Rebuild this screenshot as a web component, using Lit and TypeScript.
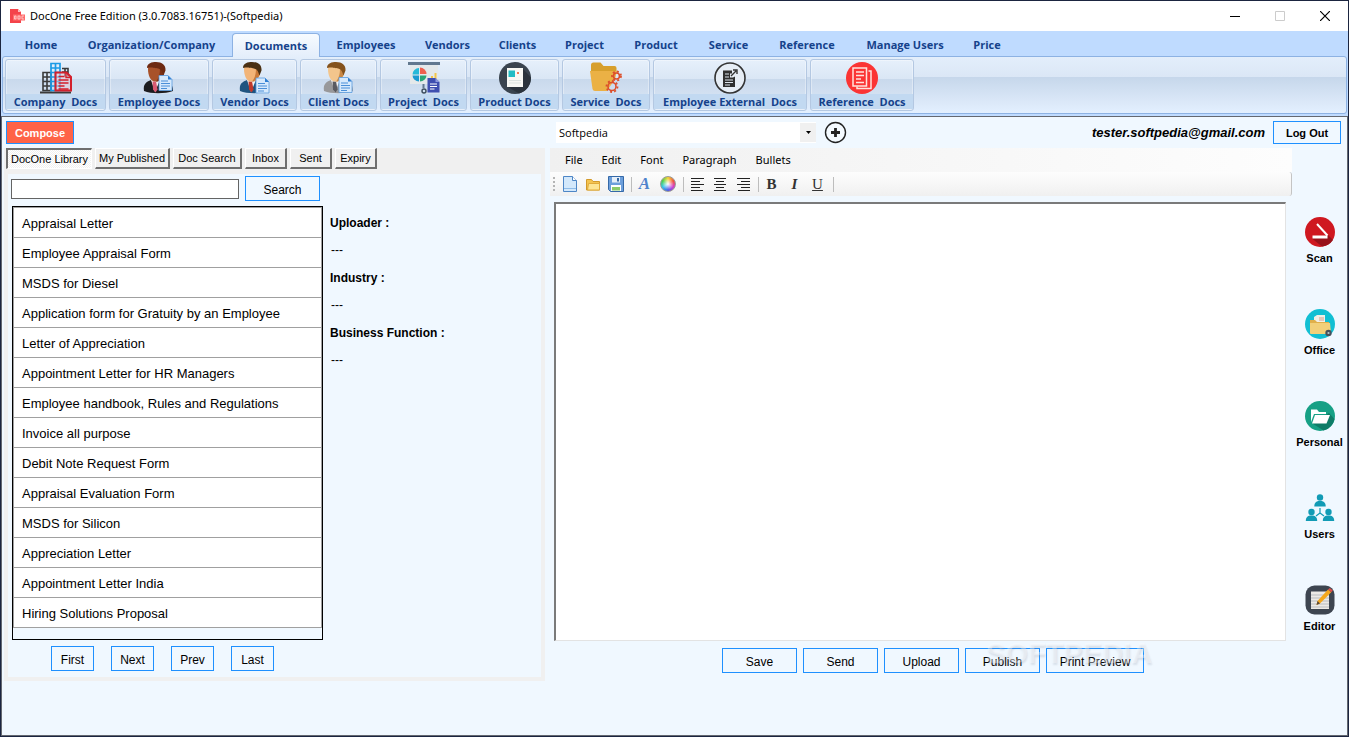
import { LitElement, html, css, svg } from "lit";
import { customElement, state } from "lit/decorators.js";
import { classMap } from "lit/directives/class-map.js";
import { styleMap } from "lit/directives/style-map.js";

const TABS = [
  { label: "Home", width: 60 },
  { label: "Organization/Company", width: 157 },
  { label: "Documents", width: 88 },
  { label: "Employees", width: 88 },
  { label: "Vendors", width: 71 },
  { label: "Clients", width: 65 },
  { label: "Project", width: 65 },
  { label: "Product", width: 74 },
  { label: "Service", width: 67 },
  { label: "Reference", width: 86 },
  { label: "Manage Users", width: 106 },
  { label: "Price", width: 54 },
];

const page = (x: number, y: number) => svg`
  <path d="M${x} ${y}h9l4 4v11h-13z" fill="#d6e9fc" stroke="#5b9ce0" stroke-width="0.8"/>
  <path d="M${x + 9} ${y}v4h4z" fill="#2f7fd2"/>
  <path d="M${x + 2} ${y + 5.5}h7M${x + 2} ${y + 8}h9M${x + 2} ${y + 10.5}h9M${x + 2} ${y + 13}h6" stroke="#4a8fd8" stroke-width="1"/>`;

const companyIcon = svg`
  <path d="M0 30.500h31" stroke="#3a3a3a" stroke-width="2"/>
  <path d="M3 10.500h8v18h-8zM3 15h8M3 19.500h8M3 24h8M7 10.500v18" fill="none" stroke="#3a3a3a" stroke-width="1.600"/>
  <path d="M22 6.500h6v8M25 6.500v8M22 10h6" fill="none" stroke="#3a3a3a" stroke-width="1.600"/>
  <path d="M11 1.500h9v27h-9zM11 6h9M11 10.500h9M11 15h9M11 19.500h9M11 24h9M15.500 1v27" fill="none" stroke="#1b9be6" stroke-width="1.700"/>
  <path d="M15.500 10.500h11l4.500 4.500v13.500h-15.500z" fill="#e9c9d4" fill-opacity="0.500" stroke="#d3202c" stroke-width="2"/>
  <path d="M18.500 14.500h6M18.500 18h10M18.500 21h10M18.500 24h6M18.500 27h10M26 11v4.500h5" fill="none" stroke="#d3202c" stroke-width="1.400"/>`;

const person = (skin: string, dark: string, hair: string, suit: string, tie: string) => svg`
  <path d="M1 29c-1-7 2-9 7-11l6 2 7-3c6 2 9 6 9 12-8 3-22 3-29 0z" fill="${suit}"/>
  <path d="M8 18l4 12 5-12z" fill="#f2f2f2"/>
  <path d="M9.500 19.500h3.500l1.500 8-2 3-2.500-3z" fill="${tie}"/>
  <path d="M13 20l6-2-1-4z" fill="${dark}"/>
  <path d="M5 7c0-4 3-5 7-5 6 0 9 3 9 8 0 6-4 9.500-9 9.500-4.500 0-7-6-7-12.500z" fill="${skin}"/>
  <path d="M17 6c0 6-1 10-4 13.500 5-1 8-5 8-10z" fill="${dark}"/>
  <path d="M4 6c0-5 5-6 9-6 6 0 10 3 9.500 8.500l-2 5c-1-2-1-4-3-6-3-2-6-1-8-2-2 0-4 0-5.500.5z" fill="${hair}"/>`;

const employeeIcon = svg`${person("#a8522a", "#7c3115", "#6d2a12", "#1c1c1f", "#d85a72")}${page(16, 13.500)}`;
const vendorIcon = svg`${person("#f2b478", "#c97a3a", "#4a3013", "#1f5480", "#c0392b")}${page(17, 16)}`;
const clientIcon = svg`${person("#f3c58c", "#c98845", "#84521c", "#98989a", "#5a5a60")}${page(16, 15.500)}`;

const projectIcon = svg`
  <path d="M0 0h32v3h-32z" fill="#62788f"/><path d="M2 3h28v19h-28z" fill="#e4e8ea"/>
  <path d="M15.500 22v4" stroke="#62788f" stroke-width="2"/>
  <circle cx="16" cy="29" r="2" fill="none" stroke="#3c4c5c" stroke-width="1.400"/>
  <path d="M11 12.500V6a6.500 6.500 0 0 0-6.500 6.500z" fill="#27b9d8"/>
  <path d="M12 12V5.500a6.500 6.500 0 0 1 6.500 6.500z" fill="#f0604f"/>
  <path d="M11 13.500v6a6.500 6.500 0 0 1-6.500-6z" fill="#1b9ad0"/>
  <path d="M12 13.500v6a6.500 6.500 0 0 0 6.500-6z" fill="#2ba578"/>
  <path d="M24 14v3M27.500 11v6" stroke="#f3c54a" stroke-width="2"/>
  <path d="M19.500 16h8l4 4v10.500h-12z" fill="#3f4fb0"/><path d="M27.500 16v4h4z" fill="#8d98dd"/>
  <path d="M22 22h7M22 24.500h7M22 27h4.500" stroke="#fff" stroke-width="1.200"/>`;

const productIcon = svg`
  <circle cx="16" cy="16" r="16" fill="#3a444f"/>
  <path d="M24 7l8 8.500a16 16 0 0 1-12 16l-12-7z" fill="#2b333c"/>
  <path d="M8 6h16v19h-16z" fill="#f8f8f4"/><path d="M9.500 8.500h6.500v6.500h-6.500z" fill="#22bcc4"/>
  <path d="M18 11h2" stroke="#ef7d57" stroke-width="2"/><path d="M10 18.500h12M10 21h12" stroke="#dde3e0"/>`;

const gear = (x: number, y: number, r: number) => svg`
  <circle cx="${x}" cy="${y}" r="${r}" fill="none" stroke="#dc4f2c" stroke-width="1.600"/>
  <circle cx="${x}" cy="${y}" r="${r + 1.5}" fill="none" stroke="#dc4f2c" stroke-width="1.800" stroke-dasharray="2 2.200"/>`;

const serviceIcon = svg`
  <path d="M1 3q0-2.500 2.500-2.500h7l3 3.500h11q2 0 2 2v3h-25.500z" fill="#d79f2c"/>
  <path d="M0 9h27l-2 8-8 12h-12q-2 0-2.500-2z" fill="#ebb145"/>
  ${gear(26.5, 14, 3)}${gear(22, 24.5, 4)}`;

const externalIcon = svg`
  <circle cx="16" cy="16" r="15" fill="#e6edf5" stroke="#333" stroke-width="1.600"/>
  <path d="M9 8.500h9v3h-2v4h3l2-1v10.500h-12z" fill="#2f2f2f"/>
  <path d="M11 12h4M11 15h4M11 18h8M11 20.500h8M11 23h5" stroke="#dce4ec" stroke-width="1"/>
  <path d="M17 14l5-5M19 8h4v4" fill="none" stroke="#333" stroke-width="1.400"/>`;

const referenceIcon = svg`
  <circle cx="16" cy="16" r="16" fill="#fb3434"/>
  <path d="M7 6h13.500v18h-13.500z" fill="none" stroke="#ffe3dd" stroke-width="1.500"/>
  <path d="M10 10h8M10 13.500h8M10 17h5M10 20.500h8" stroke="#ffe3dd" stroke-width="1.300"/>
  <path d="M22.500 9h2.500v17.500h-14v-2" fill="none" stroke="#ffe3dd" stroke-width="1.500"/>`;

const RIBBON = [
  { label: "Company  Docs", width: 101, icon: companyIcon },
  { label: "Employee Docs", width: 100, icon: employeeIcon },
  { label: "Vendor Docs", width: 85, icon: vendorIcon },
  { label: "Client Docs", width: 77, icon: clientIcon },
  { label: "Project  Docs", width: 87, icon: projectIcon },
  { label: "Product Docs", width: 89, icon: productIcon },
  { label: "Service  Docs", width: 88, icon: serviceIcon },
  { label: "Employee External  Docs", width: 154, icon: externalIcon },
  { label: "Reference  Docs", width: 104, icon: referenceIcon },
];

const PANES = [
  { label: "DocOne Library", width: 86 },
  { label: "My Published", width: 75 },
  { label: "Doc Search", width: 69 },
  { label: "Inbox", width: 42 },
  { label: "Sent", width: 42 },
  { label: "Expiry", width: 42 },
];

const DOCS = [
  "Appraisal Letter",
  "Employee Appraisal Form",
  "MSDS for Diesel",
  "Application form for Gratuity by an Employee",
  "Letter of Appreciation",
  "Appointment Letter for HR Managers",
  "Employee handbook, Rules and Regulations",
  "Invoice all purpose",
  "Debit Note Request Form",
  "Appraisal Evaluation Form",
  "MSDS for Silicon",
  "Appreciation Letter",
  "Appointment Letter India",
  "Hiring Solutions Proposal",
];

const user = (x: number, y: number) => svg`
  <circle cx="${x}" cy="${y}" r="3.200" fill="#129bb5"/>
  <path d="M${x - 5.7} ${y + 9}c0-4 2-5 4-5.500h3.400c2 .5 4 1.500 4 5.500z" fill="#129bb5"/>`;

const RAIL = [
  {
    label: "Scan",
    icon: svg`<circle cx="15" cy="15" r="15" fill="#cf1820"/>
      <path d="M23 18l5 5a15 15 0 0 1-11 6.500l-10-8z" fill="#98121a"/>
      <path d="M7.500 18.500h15v3h-15z" fill="#fff"/><path d="M12 7l10.500 11.500" stroke="#fff" stroke-width="2"/>`,
  },
  {
    label: "Office",
    icon: svg`<circle cx="15" cy="15" r="15" fill="#12bfd3"/>
      <path d="M9 8l3-2h8v12h-11z" fill="#f2efe6"/><path d="M14 9h5M14 11h5" stroke="#d9a08a"/>
      <path d="M5 11h5l2 2h12v10h-19z" fill="#e0b04a"/><path d="M5 14h20l1 10q0 1-1 1h-19q-1 0-1-1z" fill="#f2d079"/>
      <circle cx="23.500" cy="24" r="3.200" fill="#45515c"/><circle cx="23.500" cy="24" r="1.100" fill="#b8c4cc"/>`,
  },
  {
    label: "Personal",
    icon: svg`<circle cx="15" cy="15" r="15" fill="#16a085"/>
      <path d="M24 12l5.500 6a15 15 0 0 1-11 11.500l-11-7z" fill="#0e7c67"/>
      <path d="M6 8.500h6l2 2.500h7v2h-12l-3 8z" fill="#fff"/><path d="M10 14h15l-3.500 8.500h-14.500z" fill="#fff"/>`,
  },
  {
    label: "Users",
    icon: svg`${user(15, 4.500)}${user(6.500, 19)}${user(23.500, 19)}
      <path d="M15 15v5M15 20l-4 3M15 20l4 3" fill="none" stroke="#129bb5" stroke-width="1.200"/>`,
  },
  {
    label: "Editor",
    icon: svg`<rect x="0.500" y="0.500" width="29" height="29" rx="9" fill="#3d4550"/>
      <path d="M6 6.500h18v17.500h-18z" fill="#eceae6"/>
      <path d="M6 10h18M6 13h18M6 16h18M6 19h18M6 22h18" stroke="#b9bcc0"/>
      <path d="M11.500 20l1-4L23 4.500l3.200 2.800L15 18.500z" fill="#f5a81c"/>
      <path d="M23 4.500l1.800-1.500 3 2.600-1.600 1.700z" fill="#e0524a"/><path d="M11.500 20l1-4 2.500 2.500z" fill="#5b4a3a"/>`,
  },
];

const glyph = (body: unknown, size = 16) =>
  html`<svg width=${size} height=${size} viewBox="0 0 16 16" aria-hidden="true">${body}</svg>`;

const TOOLS: { name: string; art?: unknown }[] = [
  { name: "New", art: svg`<path d="M1.500 .5h9l4 4v11h-13z" fill="#d3e8fb" stroke="#4e86c6"/><path d="M10.500 .5v4h4" fill="#fff" stroke="#4e86c6"/><path d="M2 12.500h12" stroke="#8fbce8"/>` },
  { name: "Open", art: svg`<path d="M1.500 3.500h5l1.500 2h6.500v8.500h-13z" fill="#f4c451" stroke="#d39a2b"/><path d="M3.500 7.500h11v6.500h-12z" fill="#fde594" stroke="#e0ab3b"/>` },
  { name: "Save", art: svg`<path d="M.5 .5h15v15h-13l-2-2z" fill="#6d9fdb" stroke="#3569a8"/><path d="M4 1h8v5.500h-8z" fill="#e6eff9"/><path d="M9 2h2v3.500h-2z" fill="#3569a8"/><path d="M3 9h10v6h-10z" fill="#fff"/><path d="M4 11h8v3.500h-8z" fill="#8ccb6a"/>` },
  { name: "" },
  { name: "Font" },
  { name: "Color" },
  { name: "" },
  { name: "Left", art: svg`<path d="M2 2.500h13M2 5.500h9M2 8.500h13M2 11.500h9M2 14.500h12" stroke="#222"/>` },
  { name: "Center", art: svg`<path d="M2 2.500h12M4 5.500h8M2 8.500h12M4 11.500h8M2 14.500h12" stroke="#222"/>` },
  { name: "Right", art: svg`<path d="M2 2.500h13M6 5.500h9M2 8.500h13M6 11.500h9M3 14.500h12" stroke="#222"/>` },
  { name: "" },
  { name: "Bold" },
  { name: "Italic" },
  { name: "Underline" },
  { name: "" },
];

@customElement("app-root")
export class AppRoot extends LitElement {
  static styles = css`
    :host {
      display: block;
      font-family: "Liberation Sans", Arial, sans-serif;
      font-size: 13px;
      color: #000;
    }
    * { box-sizing: border-box; }
    button, input, select, textarea { font: inherit; color: inherit; margin: 0; border-radius: 0; }
    button { padding: 0; cursor: pointer; }
    svg { display: block; flex: none; }
    .window {
      min-height: 100vh;
      display: flex;
      flex-direction: column;
      border: 1px solid #1b2540;
      background: #bfdbff;
    }
    .titlebar {
      display: flex;
      align-items: center;
      height: 30px;
      padding: 0 1px 0 8px;
      background: #fff;
    }
    .title {
      flex: 1;
      margin: 0 0 0 5px;
      font: 400 11px/16px "Noto Sans", "Open Sans", sans-serif;
    }
    .caption-button {
      width: 45px;
      height: 30px;
      display: grid;
      place-items: center;
      border: 0;
      background: none;
    }
    .tabs { display: flex; height: 25px; padding-left: 9px; }
    .tab {
      display: flex;
      align-items: center;
      justify-content: center;
      height: 25px;
      margin: 0 1px;
      padding-top: 2px;
      color: #15428b;
      text-decoration: none;
      white-space: nowrap;
      border: 1px solid transparent;
      border-bottom: 0;
      font: 700 11px/16px "Open Sans", "Noto Sans", sans-serif;
    }
    .tab.active {
      position: relative;
      height: 24px;
      margin-top: 2px;
      padding-top: 0;
      border-color: #8db2e3;
      border-radius: 4px 4px 0 0;
      background: linear-gradient(#f7fbff, #e4eefb);
    }
    .ribbon {
      display: flex;
      gap: 3px;
      margin: 0 1px 2px;
      padding: 2px;
      border: 1px solid #8db2e3;
      border-radius: 3px;
      background: linear-gradient(#e3eefb, #dbe7f6 35%, #c6d7eb 36%, #dbe8f8 80%, #e3f0ff);
    }
    .ribbon-button {
      display: flex;
      flex-direction: column;
      align-items: center;
      height: 52px;
      border: 1px solid #b4c8e2;
      border-radius: 3px;
      background: linear-gradient(#e6f0fb, #dae6f5 38%, #c9d9ec 39%, #dde9f7);
      box-shadow: inset 0 0 0 1px rgba(255, 255, 255, 0.35);
      padding-top: 2px;
      color: #15428b;
      font: 700 11px/15px "Open Sans", "Noto Sans", sans-serif;
    }
    .ribbon-label {
      align-self: stretch;
      background: #c2d9f1;
      text-align: center;
      white-space: pre;
    }
    .client {
      flex: 1;
      display: flex;
      flex-direction: column;
      border: 1px solid #646870;
      background: #f0f8ff;
      padding: 4px 0 54px 2px;
    }
    .row { display: grid; grid-template-columns: 541px minmax(0, 1fr) 55px; }
    .account { height: 27px; align-items: start; }
    .outlined { border: 1px solid #1e90ff; background: #f0f8ff; white-space: nowrap; font-size: 12px; }
    .compose {
      width: 68px;
      height: 23px;
      margin-left: 2px;
      background: #ff6347;
      color: #fff;
      font-weight: 700;
      font-size: 11px;
    }
    .account-bar { grid-column: 2 / 4; display: flex; align-items: center; padding: 0 6px 0 11px; }
    .combo { position: relative; width: 260px; height: 21px; }
    .combo-select {
      width: 100%;
      height: 21px;
      padding: 0 20px 0 3px;
      border: 0;
      appearance: none;
      background: #fff;
      font: 400 11px/16px "Open Sans", "Noto Sans", sans-serif;
    }
    .combo-arrow {
      position: absolute;
      right: 0;
      top: 1px;
      width: 16px;
      height: 19px;
      display: grid;
      place-items: center;
      background: #f0f0f0;
      pointer-events: none;
    }
    .add { margin-left: 8px; border: 0; background: none; height: 23px; }
    .email { margin-left: auto; margin-right: 8px; font-style: italic; font-weight: 700; font-size: 13px; }
    .logout { width: 68px; height: 23px; font-size: 11px; font-weight: 700; }
    .main { flex: 1; }
    .library {
      display: flex;
      flex-direction: column;
      background: #f0f0f0;
      padding: 0 4px 4px;
    }
    .panes { display: flex; gap: 3px; height: 26px; margin-left: -2px; }
    .pane {
      height: 21px;
      border: 1px solid;
      border-width: 1px 2px 2px 1px;
      border-color: #fff #6f6f6f #6f6f6f #fff;
      background: #f0f0f0;
      font-size: 11px;
      white-space: nowrap;
    }
    .pane.active {
      border-width: 2px 1px 1px 2px;
      border-color: #6f6f6f #fff #fff #6f6f6f;
      background: repeating-conic-gradient(#fff 0 25%, #f0f0f0 0 50%) 0 0 / 2px 2px;
    }
    .library-body {
      flex: 1;
      display: flex;
      flex-direction: column;
      padding: 2px 4px 6px 3px;
      background: #f0f8ff;
    }
    .search { display: flex; align-items: center; gap: 6px; }
    .search-input { width: 228px; height: 20px; border: 1px solid #646464; background: #fff; padding: 0 4px; }
    .search-button { width: 75px; height: 25px; padding-top: 2px; }
    .browse { flex: 1; display: flex; gap: 7px; margin: 5px 0 6px 1px; }
    .docs {
      width: 311px;
      margin: 0;
      padding: 0;
      list-style: none;
      border: 1px solid #000;
    }
    .doc {
      display: block;
      width: 100%;
      height: 30px;
      padding: 2px 8px 0;
      text-align: left;
      border: 1px solid #a0a0a0;
      border-top: 0;
      background: #fff;
    }
    .docs li:first-child .doc { height: 31px; border-top: 1px solid #a0a0a0; }
    .details { margin: 9px 0 0; font-size: 12px; line-height: 16px; }
    .details dt { font-weight: 700; }
    .details dd { margin: 11px 0 12px 1px; }
    .pager { display: flex; gap: 17px; margin-left: 40px; }
    .pager-button { width: 43px; height: 25px; padding-top: 2px; }
    .editor { display: flex; flex-direction: column; margin-left: 5px; }
    .menubar {
      display: flex;
      align-items: center;
      gap: 19px;
      height: 24px;
      padding-left: 15px;
      background: linear-gradient(90deg, #f0f0f0, #fdfdfd);
    }
    .menu { border: 0; background: none; font: 400 11px/16px "Noto Sans", "Open Sans", sans-serif; }
    .toolbar {
      display: flex;
      align-items: center;
      height: 24px;
      padding-left: 3px;
      border-right: 1px solid #c4c4c4;
      border-radius: 0 3px 3px 0;
      background: linear-gradient(#fdfdfd, #f0f0f0);
    }
    .grip {
      width: 2px;
      height: 15px;
      margin-right: 3px;
      background: repeating-linear-gradient(#b4b4b4 0 2px, transparent 2px 4px);
    }
    .tool { width: 23px; height: 22px; display: grid; place-items: center; border: 0; background: none; }
    .rule { width: 6px; height: 15px; border-right: 1px solid #bdbdbd; margin-right: 1px; margin-left: -1px; }
    .tool-letter { font: 700 15px/16px "Liberation Serif", serif; color: #333; }
    .italic { font-style: italic; }
    .underline { font-weight: 400; text-decoration: underline; }
    .font-letter { font-style: italic; color: #4f83cc; font-size: 17px; }
    .wheel {
      width: 16px;
      height: 16px;
      border-radius: 50%;
      background: radial-gradient(#fff, transparent 60%), conic-gradient(#f6d433, #f0503c, #d43bd0, #4a5be8, #35c4ea, #4cd04a, #f6d433);
      border: 1px solid #999;
    }
    .sheet {
      flex: 1;
      display: block;
      margin: 6px 6px 7px 4px;
      min-height: 200px;
      border: solid;
      border-width: 2px 1px 1px 2px;
      border-color: #7a7a7a #e3e3e3 #e3e3e3 #7a7a7a;
      background: #fff;
      resize: none;
      outline: none;
    }
    .actions { position: relative; display: flex; justify-content: center; gap: 6px; padding: 0 0 8px 24px; }
    .action { width: 75px; height: 25px; padding-top: 2px; }
    .wide { width: 98px; }
    .watermark {
      position: absolute;
      left: 436px;
      top: -12px;
      font: 700 29px/34px "Liberation Sans", Arial, sans-serif;
      color: rgba(255, 255, 255, 0.35);
      text-shadow: 1px 2px 2px rgba(120, 130, 150, 0.2);
      pointer-events: none;
    }
    .rail { display: flex; flex-direction: column; gap: 43px; padding-top: 69px; }
    .rail-button {
      display: flex;
      flex-direction: column;
      align-items: center;
      gap: 4px;
      height: 49px;
      border: 0;
      background: none;
      font-size: 11px;
      font-weight: 700;
      line-height: 14px;
    }
  `;

  @state() private tab = "Documents";
  @state() private pane = "DocOne Library";

  private tool(t: { name: string; art?: unknown }) {
    if (!t.name) return html`<span class="rule"></span>`;
    let face: unknown;
    if (t.name === "Font") face = html`<span class="tool-letter font-letter">A</span>`;
    else if (t.name === "Color") face = html`<span class="wheel"></span>`;
    else if (t.name === "Bold") face = html`<span class="tool-letter">B</span>`;
    else if (t.name === "Italic") face = html`<span class="tool-letter italic">I</span>`;
    else if (t.name === "Underline") face = html`<span class="tool-letter underline">U</span>`;
    else face = glyph(t.art);
    return html`<button class="tool" aria-label=${t.name}>${face}</button>`;
  }

  render() {
    return html`
      <div class="window">
        <header class="titlebar">
          ${glyph(svg`<path d="M1 1h8l3 3v11h-11z" fill="#f4434a"/><path d="M9 1v3h3z" fill="#fbb"/><path d="M4 6.500h12v6h-12z" fill="#ff6b6b"/><path d="M5.500 8v3h1.500v-3zM9 8h2v3h-2zM15 8h-2v3h2" fill="none" stroke="#ffd4d4" stroke-width="0.800"/>`)}
          <h1 class="title">DocOne Free Edition (3.0.7083.16751)-(Softpedia)</h1>
          <button class="caption-button" aria-label="Minimize">
            <svg width="10" height="10"><path d="M0 5.500h10" stroke="#000"/></svg>
          </button>
          <button class="caption-button" aria-label="Maximize" disabled>
            <svg width="10" height="10"><path d="M.5 .5h9v9h-9z" fill="none" stroke="#ccc"/></svg>
          </button>
          <button class="caption-button" aria-label="Close">
            <svg width="10" height="10"><path d="M0 0l10 10M10 0l-10 10" stroke="#000" stroke-width="1.200"/></svg>
          </button>
        </header>

        <nav class="tabs">
          ${TABS.map(
            (t) => html`<a
              href="#"
              class=${classMap({ tab: true, active: this.tab === t.label })}
              style=${styleMap({ width: `${t.width}px` })}
              @click=${(e: Event) => { e.preventDefault(); this.tab = t.label; }}
            >${t.label}</a>`
          )}
        </nav>

        <div class="ribbon">
          ${RIBBON.map(
            (r) => html`<button class="ribbon-button" style=${styleMap({ width: `${r.width}px` })}>
              <svg width="32" height="32" viewBox="0 0 32 32" aria-hidden="true">${r.icon}</svg>
              <span class="ribbon-label">${r.label}</span>
            </button>`
          )}
        </div>

        <div class="client">
          <div class="row account">
            <button class="outlined compose">Compose</button>
            <div class="account-bar">
              <div class="combo">
                <select class="combo-select" aria-label="Company"><option>Softpedia</option></select>
                <span class="combo-arrow"><svg width="5" height="3"><path d="M0 0h5l-2.500 3z"/></svg></span>
              </div>
              <button class="add" aria-label="Add company">
                <svg width="23" height="23" viewBox="0 0 23 23">
                  <circle cx="11.500" cy="11.500" r="10" fill="#f4faff" stroke="#222" stroke-width="1.400"/>
                  <path d="M11.500 7v9M7 11.500h9" stroke="#222" stroke-width="2.800"/>
                </svg>
              </button>
              <span class="email">tester.softpedia@gmail.com</span>
              <button class="outlined logout">Log Out</button>
            </div>
          </div>

          <div class="row main">
            <section class="library">
              <div class="panes">
                ${PANES.map(
                  (p) => html`<button
                    class=${classMap({ pane: true, active: this.pane === p.label })}
                    style=${styleMap({ width: `${p.width}px` })}
                    @click=${() => (this.pane = p.label)}
                  >${p.label}</button>`
                )}
              </div>
              <div class="library-body">
                <div class="search">
                  <input class="search-input" type="text" aria-label="Search documents" />
                  <button class="outlined search-button">Search</button>
                </div>
                <div class="browse">
                  <ul class="docs">
                    ${DOCS.map((d) => html`<li><button class="doc">${d}</button></li>`)}
                  </ul>
                  <dl class="details">
                    <dt>Uploader :</dt><dd>---</dd>
                    <dt>Industry :</dt><dd>---</dd>
                    <dt>Business Function :</dt><dd>---</dd>
                  </dl>
                </div>
                <div class="pager">
                  ${["First", "Next", "Prev", "Last"].map((p) => html`<button class="outlined pager-button">${p}</button>`)}
                </div>
              </div>
            </section>

            <section class="editor">
              <div class="menubar">
                ${["File", "Edit", "Font", "Paragraph", "Bullets"].map((m) => html`<button class="menu">${m}</button>`)}
              </div>
              <div class="toolbar"><span class="grip"></span>${TOOLS.map((t) => this.tool(t))}</div>
              <textarea class="sheet" aria-label="Document"></textarea>
              <div class="actions">
                ${["Save", "Send", "Upload", "Publish"].map((a) => html`<button class="outlined action">${a}</button>`)}
                <button class="outlined action wide">Print Preview</button>
                <span class="watermark" aria-hidden="true">SOFTPEDIA</span>
              </div>
            </section>

            <aside class="rail">
              ${RAIL.map(
                (r) => html`<button class="rail-button">
                  <svg width="30" height="30" viewBox="0 0 30 30" aria-hidden="true">${r.icon}</svg>
                  <span>${r.label}</span>
                </button>`
              )}
            </aside>
          </div>
        </div>
      </div>
    `;
  }
}
